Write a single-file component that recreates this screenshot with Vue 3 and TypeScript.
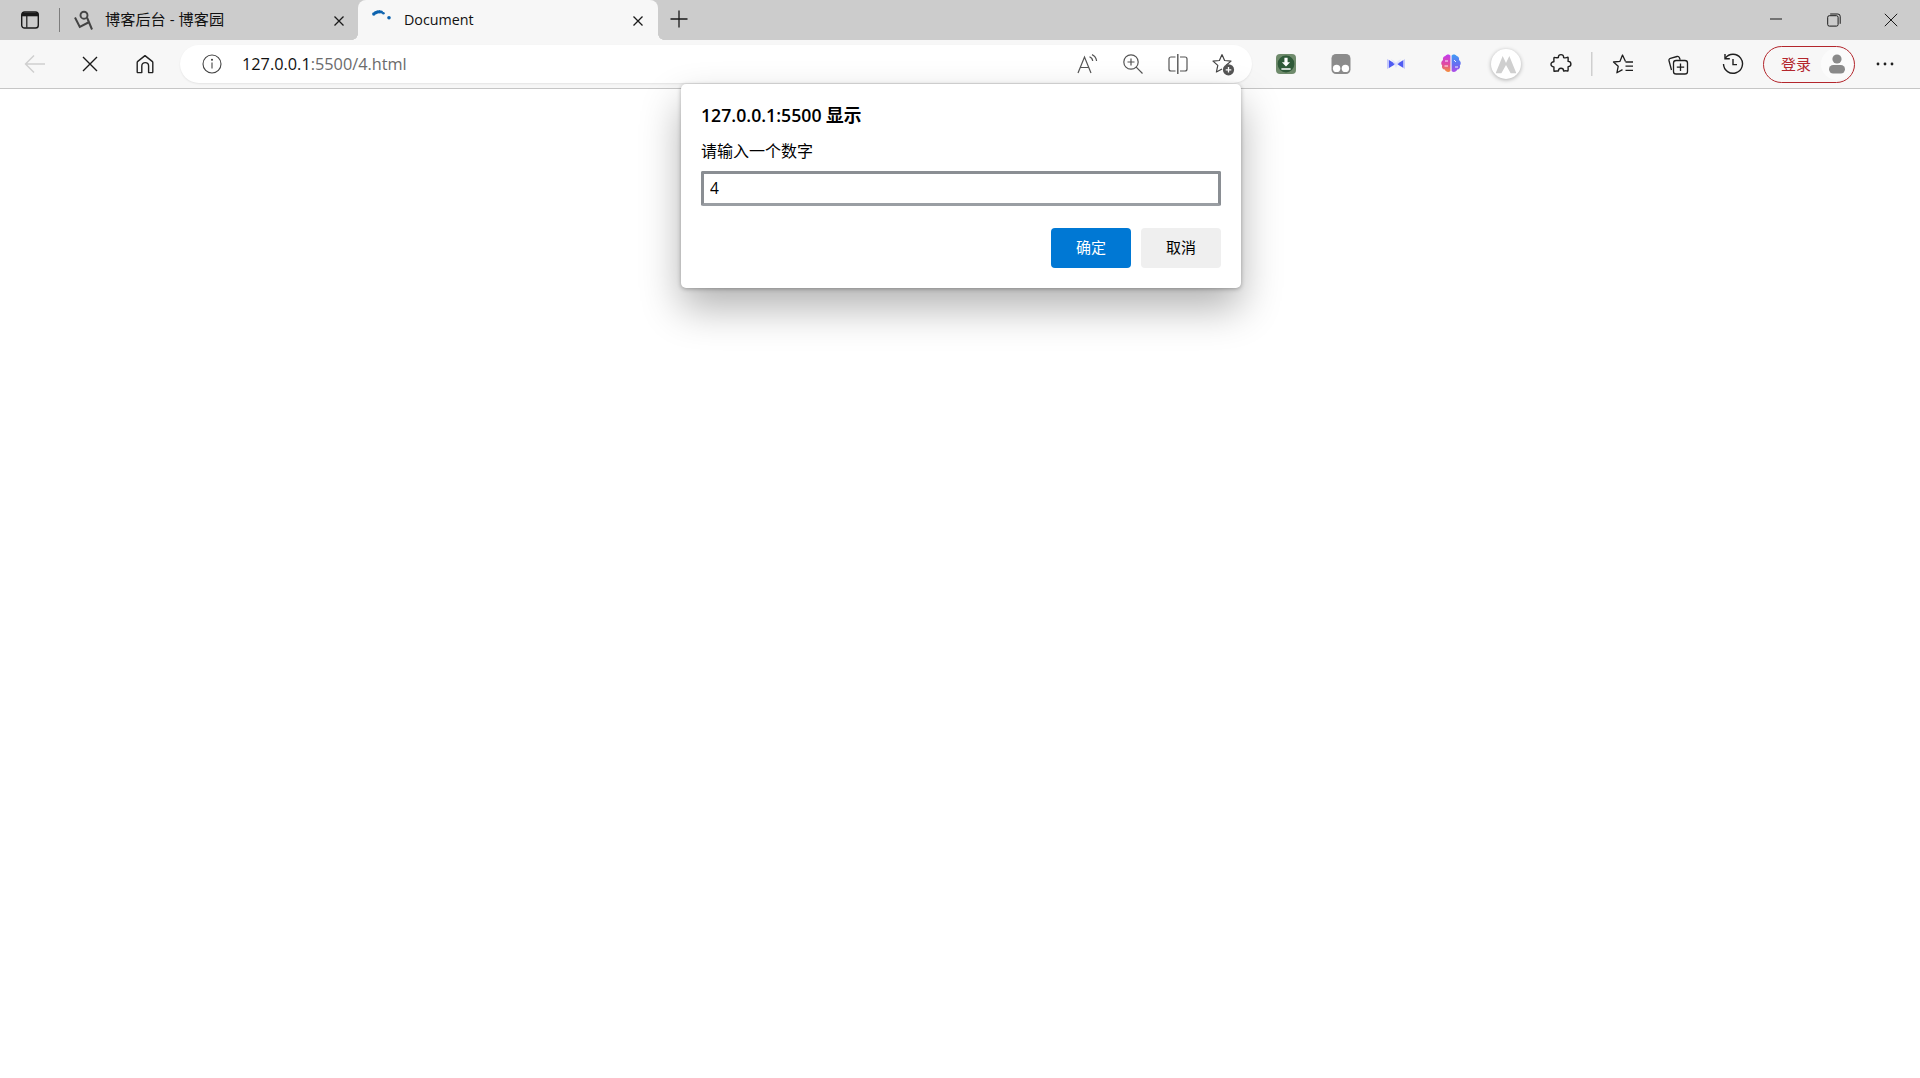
<script setup lang="ts">
import { ref } from "vue";

const tabs = { inactive: "博客后台 - 博客园", active: "Document" };
const host = "127.0.0.1";
const rest = ":5500/4.html";
const answer = ref<string>("4");
</script>

<template>
  <div class="browser">
    <header class="strip">
      <button class="strip-btn side">
        <svg width="20" height="20" viewBox="0 0 20 20" fill="none">
          <rect x="1.7" y="2" width="16.6" height="16" rx="2.8" stroke="#1a1a1a" stroke-width="1.4" />
          <path d="M2 2.600h16v3.700H2z" fill="#1a1a1a" />
          <path d="M6.800 6v11.500" stroke="#1a1a1a" stroke-width="1.2" />
        </svg>
      </button>
      <span class="strip-sep"></span>
      <div class="tab off">
        <svg class="fav" width="20" height="20" viewBox="0 0 20 20" fill="none">
          <circle cx="10" cy="5.200" r="3.500" stroke="#444" stroke-width="1.900" />
          <path d="M1 7.500 5.800 17l9.500-5" stroke="#444" stroke-width="2" />
          <path d="M13 7.500 18 19.500" stroke="#444" stroke-width="2" />
        </svg>
        <span class="tab-title">{{ tabs.inactive }}</span>
        <svg class="tab-x" width="12" height="12" viewBox="0 0 12 12"><path d="M1.500 1.500l9 9M10.500 1.500l-9 9" stroke="#1a1a1a" stroke-width="1.300" /></svg>
      </div>
      <div class="tab on">
        <svg class="spin" width="20" height="20" viewBox="0 0 20 20" fill="#0c62ae">
          <circle cx="1.800" cy="7" r="1.700" /><circle cx="3.600" cy="5.800" r="1.700" /><circle cx="5.500" cy="5" r="1.700" /><circle cx="7.500" cy="4.700" r="1.700" /><circle cx="9.500" cy="5" r="1.500" /><circle cx="11.400" cy="6.200" r="1.300" /><circle cx="17" cy="10.800" r="1.800" />
        </svg>
        <span class="tab-title">{{ tabs.active }}</span>
        <svg class="tab-x" width="12" height="12" viewBox="0 0 12 12"><path d="M1.500 1.500l9 9M10.500 1.500l-9 9" stroke="#1a1a1a" stroke-width="1.300" /></svg>
      </div>
      <button class="strip-btn plus">
        <svg width="18" height="18" viewBox="0 0 18 18"><path d="M9 .5v17M.5 9h17" stroke="#1a1a1a" stroke-width="1.300" /></svg>
      </button>
      <div class="winctl">
        <button class="win"><svg width="14" height="14" viewBox="0 0 14 14"><path d="M1 6h12" stroke="#1a1a1a" stroke-width="1" /></svg></button>
        <button class="win"><svg width="14" height="14" viewBox="0 0 14 14" fill="none" stroke="#1a1a1a"><rect x=".7" y="2.700" width="10.400" height="10.400" rx="1.600" /><path d="M3.200 1h7.600a2.400 2.400 0 0 1 2.400 2.400v7.400" /></svg></button>
        <button class="win"><svg width="14" height="14" viewBox="0 0 14 14"><path d="M.8.8l12.400 12.400M13.200.8.8 13.200" stroke="#1a1a1a" stroke-width="1" /></svg></button>
      </div>
    </header>

    <nav class="toolbar">
      <button class="tool">
        <svg width="22" height="22" viewBox="0 0 22 22" fill="none" stroke="#cfcfcf" stroke-width="1.400"><path d="M21 11H1.500M10 2.500 1.500 11l8.500 8.500" /></svg>
      </button>
      <button class="tool">
        <svg width="18" height="18" viewBox="0 0 18 18" fill="none" stroke="#1a1a1a" stroke-width="1.400"><path d="M2 2l14 14M16 2 2 16" /></svg>
      </button>
      <button class="tool">
        <svg width="22" height="22" viewBox="0 0 22 22" fill="none" stroke="#222" stroke-width="1.400"><path d="M3.200 19V9.600a1.600 1.600 0 0 1 .6-1.200L11 2.600l7.200 5.800a1.600 1.600 0 0 1 .6 1.200V19a.6.6 0 0 1-.6.6h-3.600V13a3.400 3.400 0 0 0-6.800 0v6.600H3.800a.6.6 0 0 1-.6-.6z" stroke-linejoin="round" /></svg>
      </button>

      <div class="omnibox">
        <svg class="info" width="20" height="20" viewBox="0 0 20 20" fill="none" stroke="#444" stroke-width="1.100">
          <circle cx="10" cy="10" r="9" />
          <path d="M10 8.600v6" />
          <circle cx="10" cy="5.800" r=".5" fill="#444" />
        </svg>
        <span class="url"><span class="host">{{ host }}</span><span class="path">{{ rest }}</span></span>
        <div class="omni-icons">
          <button class="omni-btn">
            <svg width="22" height="22" viewBox="0 0 22 22" fill="none" stroke="#555" stroke-width="1.200"><path d="M1 20 7.500 4 14 20M3.400 14.500h8.200" /><path d="M12.500 3.800a5 5 0 0 1 3.200 4.200M15 1.600a8 8 0 0 1 4.600 6.400" /></svg>
          </button>
          <button class="omni-btn">
            <svg width="22" height="22" viewBox="0 0 22 22" fill="none" stroke="#555" stroke-width="1.200"><circle cx="9" cy="9" r="7.200" /><path d="M14.200 14.200 20.500 20.500M5.500 9h7M9 5.500v7" /></svg>
          </button>
          <button class="omni-btn">
            <svg width="22" height="22" viewBox="0 0 22 22" fill="none" stroke="#555" stroke-width="1.200"><path d="M8.500 4H4a2 2 0 0 0-2 2v10a2 2 0 0 0 2 2h4.500M13 4h5a2 2 0 0 1 2 2v10a2 2 0 0 1-2 2h-5" /><path d="M10.800 1v20" stroke-width="1.400" /></svg>
          </button>
          <button class="omni-btn">
            <svg width="24" height="24" viewBox="0 0 24 24" fill="none" stroke="#444" stroke-width="1.200"><path d="M11 2.500l2.600 6 6.400.6-4.800 4.200 1 3M11 2.500 8.400 8.500 2 9.100l4.800 4.300L5.400 20l5.600-3" stroke-linejoin="round" /><circle cx="17.500" cy="17.800" r="5.600" fill="#555" stroke="none" /><path d="M17.500 15v5.600M14.700 17.800h5.600" stroke="#fff" stroke-width="1.300" /></svg>
          </button>
        </div>
      </div>

      <div class="tools-right">
        <button class="tool">
          <svg width="20" height="20" viewBox="0 0 20 20"><rect width="20" height="20" rx="4" fill="#6f8b6c" /><circle cx="10" cy="10" r="8.400" fill="#2f5a39" /><path d="M8.400 3.800h3.200v4.400h2.500L10 12.400 5.900 8.200h2.500zM5.400 14.200h9.200v1.500H5.400z" fill="#fff" /></svg>
        </button>
        <button class="tool">
          <svg width="20" height="20" viewBox="0 0 20 20"><rect x=".5" width="19" height="20" rx="4.500" fill="#8b8b8b" /><circle cx="5.600" cy="14.400" r="3.700" fill="#fff" /><circle cx="14.400" cy="14.400" r="3.700" fill="#fff" /></svg>
        </button>
        <button class="tool">
          <svg width="18" height="14" viewBox="0 0 18 14"><path d="M2 3l6.600 4L2 11z" fill="#4f5bf2" /><path d="M16.500 3 9.900 7l6.600 4z" fill="#4f5bf2" /><path d="M0 2l2 1v8l-2 1zM18 2l-1.500 1v8l1.500 1z" fill="#c4c8fb" /><path d="M4 2l5 3.500L14 2l-5 9z" fill="#dadcfd" opacity=".7" /></svg>
        </button>
        <button class="tool">
          <svg width="22" height="22" viewBox="0 0 22 22">
            <defs>
              <linearGradient id="brainL" x1="0" y1="0" x2="0" y2="1"><stop offset="0" stop-color="#c23bf0" /><stop offset=".55" stop-color="#e04aa0" /><stop offset="1" stop-color="#f5913a" /></linearGradient>
              <linearGradient id="brainR" x1="0" y1="0" x2="0" y2="1"><stop offset="0" stop-color="#3f9bf5" /><stop offset=".6" stop-color="#6a6bf0" /><stop offset="1" stop-color="#b24ae8" /></linearGradient>
            </defs>
            <path d="M10.400 2.600C9.400 1 6.400 1 5.400 3 3.200 3.400 2.600 5.600 3 7 1 8.200.6 11 2.200 12.600c-.8 2 .6 4 2.600 4 .6 2.400 4 3.400 5.600 1.400z" fill="url(#brainL)" />
            <path d="M11.600 2.600c1-1.600 4-1.600 5 .4 2.200.4 2.800 2.600 2.400 4 2 1.200 2.400 4 .8 5.600.8 2-.6 4-2.600 4-.6 2.400-4 3.400-5.600 1.400z" fill="url(#brainR)" />
            <path d="M5 8h3M4.500 13h3.500M14 7l2 2M15 14h3" stroke="#fff" stroke-width=".9" />
          </svg>
        </button>
        <button class="tool">
          <span class="avatar-ext">
            <svg width="22" height="20" viewBox="0 0 22 20"><path d="M0 20 7.500 1.500 11 9l3.500-7.500L22 20h-6L11 11 6 20z" fill="#cfcfcf" /></svg>
          </span>
        </button>
        <button class="tool">
          <svg width="22" height="22" viewBox="0 0 22 22" fill="none" stroke="#1f1f1f" stroke-width="1.400"><path d="M8.400 4.600C8.200 2.600 9.600 1.600 11 1.600s2.800 1 2.600 3c1.600.6 3 .2 4.400-.4.4 1.400 0 3 .1 4.200 2 0 2.800 1.400 2.800 2.700s-1 2.600-2.800 2.600c-.1 1.400.3 3-.2 4.400-1.400-.4-2.800-.4-4.200 0-.1-2-1.500-2.800-2.700-2.800s-2.600.9-2.600 2.800c-1.400-.3-3-.1-4.300.2-.4-1.400 0-3-.2-4.400C2 13.800.9 12.600 1 11.300c0-1.400 1.200-2.700 2.900-2.600.1-1.400-.3-3 .2-4.300 1.400.3 2.900.5 4.300.2z" stroke-linejoin="round" /></svg>
        </button>
        <span class="tool-sep"></span>
        <button class="tool">
          <svg width="22" height="22" viewBox="0 0 22 22" fill="none" stroke="#1f1f1f" stroke-width="1.300"><path d="M13.500 8.600 10.500 2 8 8.300 1.500 9l4.700 4.300-1.300 6.500 5.600-3.200" stroke-linejoin="round" /><path d="M13.500 9H21M13.500 13.200H21M13.500 17.400H21" /></svg>
        </button>
        <button class="tool">
          <svg width="22" height="22" viewBox="0 0 22 22" fill="none" stroke="#1f1f1f" stroke-width="1.300"><path d="M4.500 17 2 7.800a2 2 0 0 1 1.400-2.500L10 3.500a2 2 0 0 1 2.400 1.200l.8 2" /><rect x="6.500" y="7.500" width="14" height="13.500" rx="2.600" /><path d="M13.500 10.500v7.500M9.800 14.200h7.400" /></svg>
        </button>
        <button class="tool">
          <svg width="22" height="22" viewBox="0 0 22 22" fill="none" stroke="#1f1f1f" stroke-width="1.400"><path d="M3.300 5.200A9.500 9.500 0 1 1 1.500 11" /><path d="M3 1v4.800h4.800M11 6v5.600h4" /></svg>
        </button>
        <div class="login">
          <span class="login-text">登录</span>
          <span class="login-avatar">
            <svg width="16" height="20" viewBox="0 0 16 20" fill="#8a8a8a"><circle cx="8" cy="5" r="4.600" /><rect y="11" width="16" height="8.500" rx="4.200" /></svg>
          </span>
        </div>
        <button class="tool more">
          <svg width="18" height="4" viewBox="0 0 18 4" fill="#1f1f1f"><circle cx="2" cy="2" r="1.400" /><circle cx="9" cy="2" r="1.400" /><circle cx="16" cy="2" r="1.400" /></svg>
        </button>
      </div>
    </nav>

    <main class="page">
      <section class="dialog" role="dialog">
        <h1 class="dlg-title">127.0.0.1:5500 显示</h1>
        <p class="dlg-msg">请输入一个数字</p>
        <input v-model="answer" class="dlg-input" type="text" />
        <div class="dlg-actions">
          <button class="dlg-btn primary">确定</button>
          <button class="dlg-btn">取消</button>
        </div>
      </section>
    </main>
  </div>
</template>

<style>
html, body { margin: 0; background: #fff; }
</style>

<style scoped>
.browser {
  height: 1078px;
  display: flex;
  flex-direction: column;
  overflow: hidden;
  font-family: "Open Sans", "Noto Sans CJK SC", sans-serif;
  color: #111;
}
button {
  border: 0;
  background: none;
  padding: 0;
  display: flex;
  align-items: center;
  justify-content: center;
}

.strip {
  height: 40px;
  flex: none;
  background: #cccccc;
  display: flex;
  align-items: stretch;
}
.strip-btn { flex: none; }
.side { width: 59px; }
.strip-sep {
  width: 1px;
  height: 24px;
  margin-top: 8px;
  background: #7d7d7d;
  flex: none;
}
.tab {
  flex: none;
  display: flex;
  align-items: center;
  position: relative;
}
.tab.off { width: 298px; padding-left: 14px; box-sizing: border-box; font-size: 15.2px; }
.tab.on {
  width: 300px;
  box-sizing: border-box;
  padding-left: 14px;
  background: #f7f7f7;
  border-radius: 8px 8px 0 0;
  font-size: 14.3px;
}
.tab.on::before,
.tab.on::after {
  content: "";
  position: absolute;
  bottom: 0;
  width: 6px;
  height: 6px;
}
.tab.on::before { left: -6px; background: radial-gradient(circle at 0 0, transparent 5.6px, #f7f7f7 6px); }
.tab.on::after { right: -6px; background: radial-gradient(circle at 100% 0, transparent 5.6px, #f7f7f7 6px); }
.fav { margin-right: 11px; }
.spin { margin-right: 12px; margin-top: -6px; }
.tab-title { flex: 1; white-space: nowrap; padding-bottom: 2px; }
.off .tab-title { padding-bottom: 4px; }
.off .tab-x { margin-right: 13px; }
.tab-x { margin-right: 14px; margin-top: 1px; }
.plus { width: 42px; padding-bottom: 2px; }
.winctl { margin-left: auto; display: flex; }
.win { width: 57.5px; }

.toolbar {
  height: 48px;
  flex: none;
  background: #f7f7f7;
  border-bottom: 1px solid #c6c6c6;
  display: flex;
  align-items: center;
  padding-left: 7px;
}
.tool { width: 55px; height: 48px; flex: none; }
.omnibox {
  width: 1072px;
  height: 38px;
  margin-left: 8px;
  background: #fff;
  border-radius: 19px;
  box-shadow: 0 1px 2px rgba(0, 0, 0, 0.08);
  display: flex;
  align-items: center;
  flex: none;
  padding-left: 22px;
  box-sizing: border-box;
}
.info { margin-right: 20px; flex: none; }
.url { font-size: 16.3px; white-space: nowrap; padding-bottom: 1px; }
.host { color: #111; }
.path { color: #6b6b6b; }
.omni-icons { margin-left: auto; display: flex; margin-right: 7px; }
.omni-btn { width: 45px; height: 38px; }
.tools-right { display: flex; align-items: center; margin-left: 6px; }
.tool-sep {
  width: 7px;
  height: 24px;
  flex: none;
  background: linear-gradient(#cfcfcf, #cfcfcf) center / 1.5px 100% no-repeat;
}
.avatar-ext {
  width: 30px;
  height: 30px;
  border-radius: 50%;
  background: #fff;
  box-shadow: 0 1px 4px rgba(0, 0, 0, 0.3);
  display: flex;
  align-items: center;
  justify-content: center;
}
.avatar-ext svg { transform: scale(0.95); }
.login {
  margin-left: 3px;
  width: 92px;
  height: 37px;
  box-sizing: border-box;
  border: 1.5px solid #b3262c;
  border-radius: 19px;
  display: flex;
  align-items: center;
  justify-content: space-between;
  padding: 0 1px 0 17px;
  flex: none;
}
.login-text { color: #b3262c; font-size: 15px; padding-bottom: 2px; }
.login-avatar {
  width: 32px;
  height: 32px;
  border-radius: 50%;
  background: #fbfbfb;
  display: flex;
  align-items: center;
  justify-content: center;
}
.more { margin-left: 2px; }

.page { flex: 1; position: relative; background: #fff; }
.dialog {
  position: absolute;
  top: -5px;
  left: 681px;
  width: 560px;
  height: 204px;
  box-sizing: border-box;
  padding: 19px 20px 20px;
  background: #fff;
  border-radius: 5px;
  box-shadow: 0 1px 4px rgba(0, 0, 0, 0.3), 0 20px 40px rgba(0, 0, 0, 0.3);
  display: flex;
  flex-direction: column;
}
.dlg-title {
  margin: 0;
  font-size: 17.7px;
  line-height: 24px;
  font-weight: 600;
  color: #000;
}
.dlg-msg {
  margin: 12px 0 0;
  font-size: 16px;
  line-height: 24px;
  color: #000;
}
.dlg-input {
  margin-top: 8px;
  height: 35px;
  box-sizing: border-box;
  border: 3px solid #8a8e93;
  border-bottom-color: #9a9ea3;
  border-radius: 2px;
  padding: 0 6px 2px;
  font: inherit;
  font-size: 15.5px;
  color: #000;
  outline: none;
  width: 100%;
}
.dlg-actions {
  margin-top: auto;
  display: flex;
  justify-content: flex-end;
  gap: 10px;
}
.dlg-btn {
  width: 80px;
  height: 40px;
  border-radius: 4px;
  background: #efefef;
  color: #000;
  font: inherit;
  font-size: 15px;
  padding-bottom: 4px;
}
.dlg-btn.primary { background: #0078d4; color: #fff; }
</style>
